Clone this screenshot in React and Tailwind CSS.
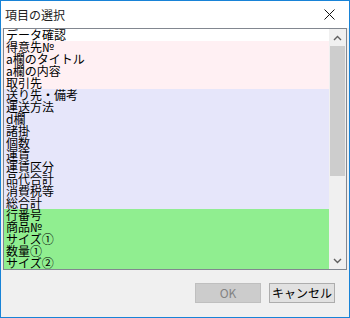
const rows = [
  { label: "データ確認", bg: "bg-white" },
  { label: "得意先№", bg: "bg-[#fff0f3]" },
  { label: "a欄のタイトル", bg: "bg-[#fff0f3]" },
  { label: "a欄の内容", bg: "bg-[#fff0f3]" },
  { label: "取引先", bg: "bg-[#fff0f3]" },
  { label: "送り先・備考", bg: "bg-[#e6e6fa]" },
  { label: "運送方法", bg: "bg-[#e6e6fa]" },
  { label: "d欄", bg: "bg-[#e6e6fa]" },
  { label: "諸掛", bg: "bg-[#e6e6fa]" },
  { label: "個数", bg: "bg-[#e6e6fa]" },
  { label: "運賃", bg: "bg-[#e6e6fa]" },
  { label: "運賃区分", bg: "bg-[#e6e6fa]" },
  { label: "品代合計", bg: "bg-[#e6e6fa]" },
  { label: "消費税等", bg: "bg-[#e6e6fa]" },
  { label: "総合計", bg: "bg-[#e6e6fa]" },
  { label: "行番号", bg: "bg-[#90ee90]" },
  { label: "商品№", bg: "bg-[#90ee90]" },
  { label: "サイズ①", bg: "bg-[#90ee90]" },
  { label: "数量①", bg: "bg-[#90ee90]" },
  { label: "サイズ②", bg: "bg-[#90ee90]" },
];

function Chevron({ up }) {
  return (
    <svg width="9" height="6" viewBox="0 0 9 6" className="block">
      <path
        d={up ? "M1 5 L4.5 1.5 L8 5" : "M1 1 L4.5 4.5 L8 1"}
        fill="none"
        stroke="#606060"
        strokeWidth="1.4"
      />
    </svg>
  );
}

export default function App() {
  return (
    <div
      className="w-[350px] h-[318px] border border-[#1883d7] bg-[#f0f0f0] flex flex-col overflow-hidden"
      style={{ fontFamily: '"Noto Sans CJK JP", "Liberation Sans", sans-serif' }}
    >
      {/* title bar */}
      <div className="h-[27px] bg-white flex items-center justify-between pl-[4px] pr-[14px] shrink-0">
        <span className="text-[12px] leading-none text-[#222]">項目の選択</span>
        <svg width="11" height="11" viewBox="0 0 11 11">
          <path d="M0.5 0.5 L10.5 10.5 M10.5 0.5 L0.5 10.5" stroke="#111" strokeWidth="1" />
        </svg>
      </div>

      {/* list box */}
      <div className="mx-[2px] h-[242px] border border-[#828790] bg-white flex shrink-0">
        <div className="flex-1 flex flex-col">
          {rows.map((r) => (
            <div
              key={r.label}
              className={`${r.bg} h-[12px] pl-[2px] text-[12px] leading-[12px] text-black whitespace-nowrap`}
            >
              {r.label}
            </div>
          ))}
        </div>
        <div className="w-[17px] bg-[#f0f0f0] flex flex-col">
          <div className="h-[17px] flex items-center justify-center">
            <Chevron up />
          </div>
          <div className="mx-[1px] h-[130px] bg-[#cdcdcd]" />
          <div className="flex-1" />
          <div className="h-[17px] flex items-center justify-center">
            <Chevron />
          </div>
        </div>
      </div>

      {/* buttons */}
      <div className="flex justify-end gap-[8px] pr-[14px] pt-[13px]">
        <button className="w-[66px] h-[20px] border border-[#bfbfbf] bg-[#cccccc] text-[12px] leading-none text-[#838383]">
          OK
        </button>
        <button className="w-[66px] h-[20px] border border-[#adadad] bg-[#e1e1e1] text-[12px] leading-none text-black">
          キャンセル
        </button>
      </div>
    </div>
  );
}
